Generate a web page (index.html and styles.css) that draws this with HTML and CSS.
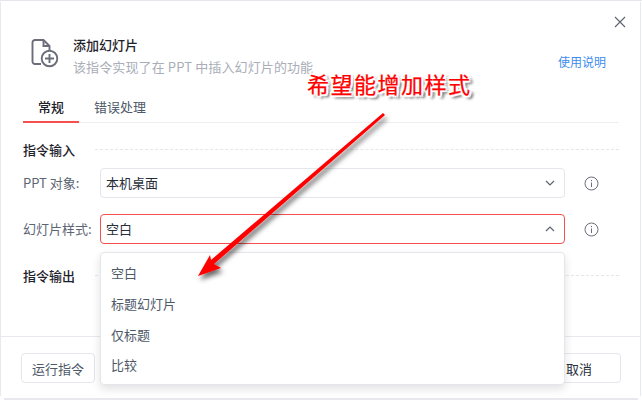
FILE: index.html
```html
<!DOCTYPE html>
<html lang="zh-CN">
<head>
<meta charset="utf-8">
<title>添加幻灯片</title>
<link rel="stylesheet" href="styles.css">
</head>
<body>
<div class="shot">
  <div class="dialog">
    <button class="close" aria-label="关闭">
      <svg width="14" height="14" viewBox="0 0 14 14"><path d="M2 2l10 10M12 2L2 12" stroke="#5c6370" stroke-width="1.1" fill="none"/></svg>
    </button>
    <header class="head">
      <svg class="head-icon" width="28" height="29" viewBox="0 0 28 29" fill="none" stroke="#6b6e7a" stroke-width="1.9">
        <path d="M10 25H4a2.500 2.500 0 0 1-2.500-2.500V3.500A2.500 2.500 0 0 1 4 1h8.500l6 6v4.500"/>
        <path d="M12.500 1v6h6"/>
        <circle cx="18.500" cy="19.500" r="7.800"/>
        <path d="M18.500 15v9M14 19.500h9"/>
      </svg>
      <div class="head-text">
        <div class="title">添加幻灯片</div>
        <div class="desc">该指令实现了在 PPT 中插入幻灯片的功能</div>
      </div>
      <a class="help">使用说明</a>
    </header>
    <nav class="tabs">
      <span class="tab active">常规</span>
      <span class="tab">错误处理</span>
    </nav>
    <section class="body">
      <div class="section-title"><span>指令输入</span><i></i></div>
      <div class="row">
        <label class="label">PPT 对象:</label>
        <div class="select"><span>本机桌面</span>
          <svg width="12" height="12" viewBox="0 0 12 12"><path d="M2 4l4 4 4-4" stroke="#5c6370" stroke-width="1.200" fill="none"/></svg>
        </div>
        <svg class="info" width="15" height="15" viewBox="0 0 15 15" fill="none" stroke="#6b6e7a"><circle cx="7.500" cy="7.500" r="6.500"/><path d="M7.500 6.500v4.500M7.500 4v1.200"/></svg>
      </div>
      <div class="row">
        <label class="label">幻灯片样式:</label>
        <div class="select open"><span>空白</span>
          <svg width="12" height="12" viewBox="0 0 12 12"><path d="M2 8l4-4 4 4" stroke="#5c6370" stroke-width="1.200" fill="none"/></svg>
        </div>
        <svg class="info" width="15" height="15" viewBox="0 0 15 15" fill="none" stroke="#6b6e7a"><circle cx="7.500" cy="7.500" r="6.500"/><path d="M7.500 6.500v4.500M7.500 4v1.200"/></svg>
      </div>
      <div class="section-title second"><span>指令输出</span><i></i></div>
    </section>
    <footer class="foot">
      <button class="btn">运行指令</button>
      <button class="btn cancel">取消</button>
    </footer>
  </div>
  <ul class="menu">
    <li>空白</li>
    <li>标题幻灯片</li>
    <li>仅标题</li>
    <li>比较</li>
  </ul>
  <svg class="arrow" width="642" height="400" viewBox="0 0 642 400">
    <defs>
      <filter id="sh" x="-20%" y="-20%" width="140%" height="140%"><feDropShadow dx="2" dy="4" stdDeviation="2.500" flood-color="#000" flood-opacity=".6"/></filter>
    </defs>
    <path filter="url(#sh)" d="M383 113L385 115 214 264 221 268 198 276 210 255 211 260Z" fill="#f00"/>
  </svg>
  <div class="note">希望能增加样式</div>
</div>
</body>
</html>
```

FILE: styles.css
```css
* { box-sizing: border-box; }
html, body { margin: 0; padding: 0; background: #fff; }
body { font-family: "Noto Sans CJK SC", "Noto Sans", sans-serif; font-size: 13px; color: #1d2129; }
.shot { position: relative; width: 642px; height: 400px; overflow: hidden; padding-top: 1px; border-top: 1px solid #e5e6eb; }
.shot::after { content: ""; position: absolute; left: 4px; right: 4px; bottom: 0; height: 2px; background: #e8e9ee; }
.dialog { position: relative; width: 641px; height: 394px; border-left: 1px solid #e8e9ee; border-right: 1px solid #e8e9ee; padding-left: 22px; padding-right: 21px; }
.close { position: absolute; right: 13px; top: 13px; width: 14px; height: 14px; padding: 0; border: 0; background: none; display: flex; }
.head { display: flex; align-items: flex-start; padding-top: 33px; height: 97px; }
.head-icon { margin: 4px 0 0 8px; flex: none; }
.head-text { margin-left: 14px; flex: 1; }
.title { font-size: 13px; font-weight: 500; line-height: 19px; }
.desc { font-size: 13px; color: #a9aeb8; line-height: 19px; margin-top: 3px; letter-spacing: .12px; }
.help { color: #3c8cf0; font-size: 12px; line-height: 18px; margin: 18px 13px 0 0; }
.tabs { display: flex; height: 24px; border-bottom: 1px solid #eceef1; }
.tab { color: #4e5969; line-height: 16px; height: 24px; white-space: nowrap; padding-left: 15px; width: 80px; }
.tab.active { width: 56px; text-align: center; padding-left: 0; color: #1d2129; font-weight: 500; border-bottom: 2px solid #f5504f; }
.body { padding: 16px 21px 0 22px; height: 214px; border-bottom: 1px solid #e8e9ee; margin: 0 -21px 0 -22px; }
.section-title { display: flex; align-items: center; height: 20px; font-weight: 500; color: #1d2129; }
.section-title i { flex: 1; margin-left: 20px; height: 0; margin-top: 1px; border-top: 1px dashed #e5e6eb; }
.section-title.second { margin-top: 21px; }
.row { display: flex; align-items: center; height: 30px; margin-top: 16px; }
.section-title + .row { margin-top: 9px; }
.label { width: 77px; color: #5c6573; white-space: nowrap; flex: none; padding-bottom: 2px; }
.select { width: 465px; height: 30px; border: 1px solid #e5e6eb; border-radius: 4px; display: flex; align-items: center; justify-content: space-between; padding: 0 8px 0 5px; color: #272e3b; }
.select span { padding-bottom: 2px; }
.select.open { border-color: #f5504f; }
.info { margin-left: 19px; flex: none; }
.foot { display: flex; justify-content: space-between; padding-top: 16px; margin: 0 -2px; }
.btn { height: 30px; width: 74px; background: #fff; border: 1px solid #e5e6eb; border-radius: 4px; font: inherit; color: #4e5969; padding: 0; }
.cancel { color: #272e3b; width: 84px; }
.menu { position: absolute; left: 100px; top: 251px; width: 465px; height: 133px; margin: 0; padding: 4px 0; list-style: none; background: #fff; border: 1px solid #e5e6eb; border-radius: 4px; box-shadow: 0 4px 10px rgba(0,0,0,.12); color: #4e5969; }
.menu li { height: 30.75px; line-height: 31px; padding-left: 10px; }
.arrow { position: absolute; left: 0; top: -1px; pointer-events: none; }
.note { position: absolute; left: 307px; top: 66px; font-size: 22px; line-height: 32px; letter-spacing: 1.5px; color: #f00; white-space: nowrap; -webkit-text-stroke: .25px #f00; text-shadow: 0 0 2px #fff, 2px 0 1px #fff, -2px 0 1px #fff, 0 2px 1px #fff, 0 -2px 1px #fff, 2px 2px 1px #fff, -2px -2px 1px #fff, 2px -2px 1px #fff, -2px 2px 1px #fff, 3px 3px 3px rgba(0,0,0,.7), 4px 2px 3px rgba(0,0,0,.4); }
```
